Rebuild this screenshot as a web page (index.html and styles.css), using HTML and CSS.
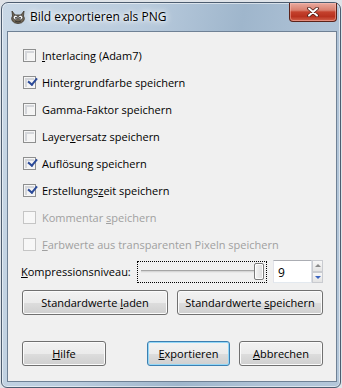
FILE: index.html
```html
<!DOCTYPE html>
<html lang="de">
<head>
    <meta charset="UTF-8">
    <title>Bild exportieren als PNG</title>
    <link rel="stylesheet" href="styles.css">
</head>
<body>
    <div class="window">
        <div class="titlebar">
            <svg class="app-icon" width="16" height="14" viewBox="0 0 16 14">
                <path d="M2 1 L5 5 L11 5 L14 1 L13.5 6 Q15 8 14 10.5 Q12 13.5 8 13.5 Q4 13.5 2 10.5 Q1 8 2.5 6 Z" fill="#6e6453" stroke="#3b342a" stroke-width="0.8"/>
                <circle cx="5.5" cy="7.5" r="2.2" fill="#fff" stroke="#2b2b2b" stroke-width="0.6"/>
                <circle cx="10.5" cy="7.5" r="2.2" fill="#fff" stroke="#2b2b2b" stroke-width="0.6"/>
                <circle cx="6" cy="7.8" r="0.9" fill="#111"/>
                <circle cx="10" cy="7.8" r="0.9" fill="#111"/>
                <path d="M5 11 Q8 12.8 11 11" fill="none" stroke="#2b2b2b" stroke-width="0.8"/>
            </svg>
            <span class="title">Bild exportieren als PNG</span>
            <div class="close-btn">
                <svg width="12" height="10" viewBox="0 0 12 10">
                    <path d="M2 1.5 L10 8.5 M10 1.5 L2 8.5" stroke="#4a1d16" stroke-width="3.6" stroke-linecap="round"/>
                    <path d="M2 1.5 L10 8.5 M10 1.5 L2 8.5" stroke="#fff" stroke-width="2" stroke-linecap="round"/>
                </svg>
            </div>
        </div>

        <div class="client">
            <div class="options">
                <div class="check-row">
                    <span class="box"></span>
                    <span><u>I</u>nterlacing (Adam7)</span>
                </div>
                <div class="check-row">
                    <span class="box checked"></span>
                    <span>Hintergrundfarbe speichern</span>
                </div>
                <div class="check-row">
                    <span class="box"></span>
                    <span>Gamma-Faktor speichern</span>
                </div>
                <div class="check-row">
                    <span class="box"></span>
                    <span>Layer<u>v</u>ersatz speichern</span>
                </div>
                <div class="check-row">
                    <span class="box checked"></span>
                    <span>Auflösung speichern</span>
                </div>
                <div class="check-row">
                    <span class="box checked"></span>
                    <span>Erstellungs<u>z</u>eit speichern</span>
                </div>
                <div class="check-row disabled">
                    <span class="box"></span>
                    <span>Kommentar <u>s</u>peichern</span>
                </div>
                <div class="check-row disabled">
                    <span class="box"></span>
                    <span><u>F</u>arbwerte aus transparenten Pixeln speichern</span>
                </div>
            </div>

            <div class="slider-row">
                <span class="slider-label"><u>K</u>ompressionsniveau:</span>
                <div class="slider">
                    <div class="track"></div>
                    <div class="handle"></div>
                </div>
                <div class="spin">
                    <div class="spin-value">9</div>
                    <div class="spin-buttons">
                        <div class="spin-btn"><span class="arrow-up"></span></div>
                        <div class="spin-btn"><span class="arrow-down"></span></div>
                    </div>
                </div>
            </div>

            <div class="btn-row">
                <div class="btn wide"><span>Standardwerte <u>l</u>aden</span></div>
                <div class="btn wide"><span>Standardwerte <u>s</u>peichern</span></div>
            </div>

            <div class="btn-row bottom">
                <div class="btn"><span><u>H</u>ilfe</span></div>
                <div class="spacer"></div>
                <div class="btn default"><span><u>E</u>xportieren</span></div>
                <div class="btn"><span><u>A</u>bbrechen</span></div>
            </div>
        </div>
    </div>
</body>
</html>
```

FILE: styles.css
```css
* {
    margin: 0;
    padding: 0;
    box-sizing: border-box;
}

body {
    width: 342px;
    height: 388px;
    background: #dfe3e8;
    font-family: 'Open Sans', 'Noto Sans', 'Liberation Sans', sans-serif;
    font-size: 11px;
    color: #000;
    overflow: hidden;
}

u {
    text-decoration: underline;
    text-underline-offset: 1px;
}

.window {
    margin: 2px 0 0 1px;
    width: 340px;
    height: 386px;
    display: flex;
    flex-direction: column;
    padding: 0 3px 5px 5px;
    border: 1px solid #4d5d70;
    border-radius: 7px 7px 6px 6px;
    background: linear-gradient(100deg, #c9d8e6 0%, #b9cbdd 35%, #9fb6cc 60%, #aec2d6 80%, #b4c7da 100%);
    box-shadow: inset 0 0 0 1px rgba(255, 255, 255, 0.55);
}

/* title bar */
.titlebar {
    height: 28px;
    display: flex;
    align-items: flex-start;
}

.app-icon {
    margin: 7px 0 0 3px;
    flex: none;
}

.title {
    margin: 5px 0 0 4px;
    font-size: 12px;
    text-shadow: 0 0 6px #fff, 0 0 10px #fff, 0 0 3px rgba(255, 255, 255, 0.9);
}

.close-btn {
    margin-left: auto;
    width: 48px;
    height: 19px;
    display: flex;
    align-items: center;
    justify-content: center;
    border: 1px solid #5b2219;
    border-top: none;
    border-radius: 0 0 4px 4px;
    background: linear-gradient(#e9aa9f 0%, #d9806f 40%, #c4412d 50%, #b8321f 75%, #d2604a 100%);
    box-shadow: inset 0 0 0 1px rgba(255, 200, 190, 0.45);
}

/* client area */
.client {
    flex: 1;
    border: 1px solid #6f8195;
    background: #f0f0f0;
    padding: 10px 13px 0 14px;
}

.check-row {
    height: 27px;
    display: flex;
    align-items: center;
    gap: 6px;
    padding-left: 1px;
}

.check-row.disabled {
    color: #a0a0a0;
}

.box {
    width: 13px;
    height: 13px;
    flex: none;
    border: 1px solid #8e8f8f;
    background: #f4f4f4;
    box-shadow: inset 0 0 0 1px #f6f6f6, inset 1px 1px 0 2px #d4d6da;
    position: relative;
}

.check-row.disabled .box {
    border-color: #c5c5c5;
    box-shadow: none;
    background: #f7f7f7;
}

.box.checked::after {
    content: "";
    position: absolute;
    left: 2px;
    top: 0px;
    width: 4px;
    height: 7px;
    border-right: 2px solid #2b4a98;
    border-bottom: 2px solid #2b4a98;
    transform: rotate(40deg);
    transform-origin: 100% 100%;
}

/* compression slider */
.slider-row {
    display: flex;
    align-items: center;
    height: 23px;
    margin-top: 2px;
}

.slider-label {
    width: 116px;
    flex: none;
    margin-left: -1px;
    padding-right: 1px;
}

.slider {
    width: 130px;
    height: 22px;
    border: 1px dotted #000;
    display: flex;
    align-items: center;
    padding: 0 2px 0 3px;
}

.track {
    flex: 1;
    height: 3px;
    border-top: 1px solid #a6a6a6;
    border-bottom: 1px solid #e8e8e8;
    background: #d7d7d7;
}

.handle {
    width: 10px;
    height: 17px;
    border: 1px solid #7a7a7a;
    border-radius: 2px;
    background: linear-gradient(90deg, #f6f6f6, #dcdcdc);
    box-shadow: inset 0 0 0 1px #fdfdfd;
}

.spin {
    display: flex;
    margin-left: 6px;
    height: 23px;
}

.spin-value {
    width: 39px;
    border: 1px solid #abadb3;
    border-left-color: #e2e3ea;
    border-right-color: #dbdfe6;
    border-bottom-color: #e3e9ef;
    background: #fff;
    padding: 3px 0 0 4px;
    font-size: 12px;
}

.spin-buttons {
    width: 11px;
    display: flex;
    flex-direction: column;
}

.spin-btn {
    flex: 1;
    border: 1px solid #c9cbd0;
    background: linear-gradient(#f7f7f7, #e4e4e4);
    display: flex;
    align-items: center;
    justify-content: center;
}

.arrow-up {
    border-left: 3px solid transparent;
    border-right: 3px solid transparent;
    border-bottom: 3px solid #8a8a8a;
}

.arrow-down {
    border-left: 3px solid transparent;
    border-right: 3px solid transparent;
    border-top: 3px solid #3b64c0;
}

/* buttons */
.btn-row {
    display: flex;
    gap: 9px;
    margin-top: 7px;
}

.btn-row.bottom {
    margin-top: 26px;
}

.spacer {
    flex: 1;
}

.btn {
    width: 84px;
    height: 25px;
    display: flex;
    align-items: center;
    justify-content: center;
    border: 1px solid #707070;
    border-radius: 3px;
    background: linear-gradient(#f2f2f2 0%, #ebebeb 50%, #dddddd 51%, #cfcfcf 100%);
    box-shadow: inset 0 0 0 1px #fbfbfb;
}

.btn.wide {
    flex: 1;
    width: auto;
}

.btn.default {
    width: 83px;
    border-color: #3c7fb1;
    box-shadow: inset 0 0 0 1px #93d7f7;
}
```
